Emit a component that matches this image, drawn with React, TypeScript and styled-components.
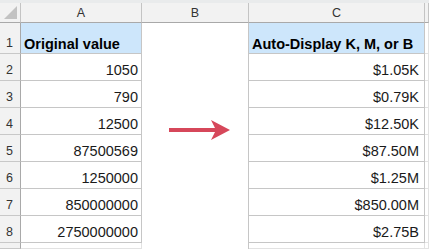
import React from 'react';
import styled, { createGlobalStyle } from 'styled-components';

const GlobalStyle = createGlobalStyle`
  html, body {
    margin: 0;
    padding: 0;
    background: #ffffff;
  }
  body {
    font-family: "Liberation Sans", Arial, sans-serif;
  }
`;

const rows: [number, string][] = [
  [1050, '$1.05K'],
  [790, '$0.79K'],
  [12500, '$12.50K'],
  [87500569, '$87.50M'],
  [1250000, '$1.25M'],
  [850000000, '$850.00M'],
  [2750000000, '$2.75B'],
];

const Sheet = styled.div`
  display: grid;
  grid-template-columns: 21px 121px 107px 176px 1fr;
  grid-template-rows: 3px 20px 31px repeat(7, 27px) 1fr;
  width: 429px;
  height: 249px;
  overflow: hidden;
  background: #ffffff;
`;

const TopBand = styled.div`
  grid-column: 1 / -1;
  background: #e9ebec;
`;

const Corner = styled.div`
  background: #f2f2f2;
  border-right: 1px solid #c4c4c4;
  border-bottom: 1px solid #a9a9a9;
  box-sizing: border-box;
  display: flex;
  align-items: flex-end;
  justify-content: flex-end;
  padding: 0 3px 3px 0;

  svg {
    display: block;
  }
`;

const ColHead = styled.div`
  background: #f2f2f2;
  border-right: 1px solid #c4c4c4;
  border-bottom: 1px solid #a9a9a9;
  box-sizing: border-box;
  display: flex;
  align-items: center;
  justify-content: center;
  font-size: 12.5px;
  color: #333333;
`;

const RowHead = styled.div`
  background: #f2f2f2;
  border-right: 1px solid #a9a9a9;
  border-bottom: 1px solid #c8c8c8;
  box-sizing: border-box;
  display: flex;
  align-items: flex-end;
  padding: 0 0 3px 6px;
  font-size: 12.5px;
  color: #333333;
`;

const Cell = styled.div<{ $head?: boolean; $pad?: number }>`
  border-right: 1px solid #c6c6c6;
  border-bottom: 1px solid #c6c6c6;
  box-sizing: border-box;
  display: flex;
  align-items: flex-end;
  justify-content: ${(p) => (p.$head ? 'flex-start' : 'flex-end')};
  padding: ${(p) => (p.$head ? '0 0 0 3px' : `0 ${p.$pad ?? 3}px 1px 0`)};
  background: ${(p) => (p.$head ? '#cde6fb' : '#ffffff')};
  font-size: 14.5px;
  line-height: 17px;
  font-weight: ${(p) => (p.$head ? 700 : 400)};
  color: ${(p) => (p.$head ? '#000000' : '#1a1a1a')};
  white-space: nowrap;
`;

const Blank = styled.div`
  border-right: 1px solid #e2e2e2;
  border-bottom: 1px solid #e2e2e2;
  box-sizing: border-box;
`;

const Gap = styled.div`
  grid-column: 3;
  grid-row: 3 / -1;
  border-right: 1px solid #c6c6c6;
  box-sizing: border-box;
  padding: 96px 0 0 27px;
  background: #ffffff;

  svg {
    display: block;
  }
`;

const Arrow = () => (
  <svg width="62" height="22" viewBox="0 0 62 22">
    <rect x="0" y="9" width="48" height="4" fill="#d6475a" />
    <path d="M42 1 L61 11 L42 21 L47 11 Z" fill="#d6475a" />
  </svg>
);

const App = () => {
  return (
    <>
      <GlobalStyle />
      <Sheet>
        <TopBand />
        <Corner>
          <svg width="13" height="13" viewBox="0 0 13 13">
            <path d="M13 0 L13 13 L0 13 Z" fill="#c2c2c2" />
          </svg>
        </Corner>
        <ColHead>A</ColHead>
        <ColHead>B</ColHead>
        <ColHead>C</ColHead>
        <ColHead />

        <RowHead>1</RowHead>
        <Cell $head>Original value</Cell>
        <Gap>
          <Arrow />
        </Gap>
        <Cell $head>Auto-Display K, M, or B</Cell>
        <Blank />

        {rows.map(([value, shown], i) => (
          <React.Fragment key={i}>
            <RowHead>{i + 2}</RowHead>
            <Cell>{value}</Cell>
            <Cell $pad={5}>{shown}</Cell>
            <Blank />
          </React.Fragment>
        ))}

        <RowHead />
        <Blank />
        <Blank />
        <Blank />
      </Sheet>
    </>
  );
};

export default App;
